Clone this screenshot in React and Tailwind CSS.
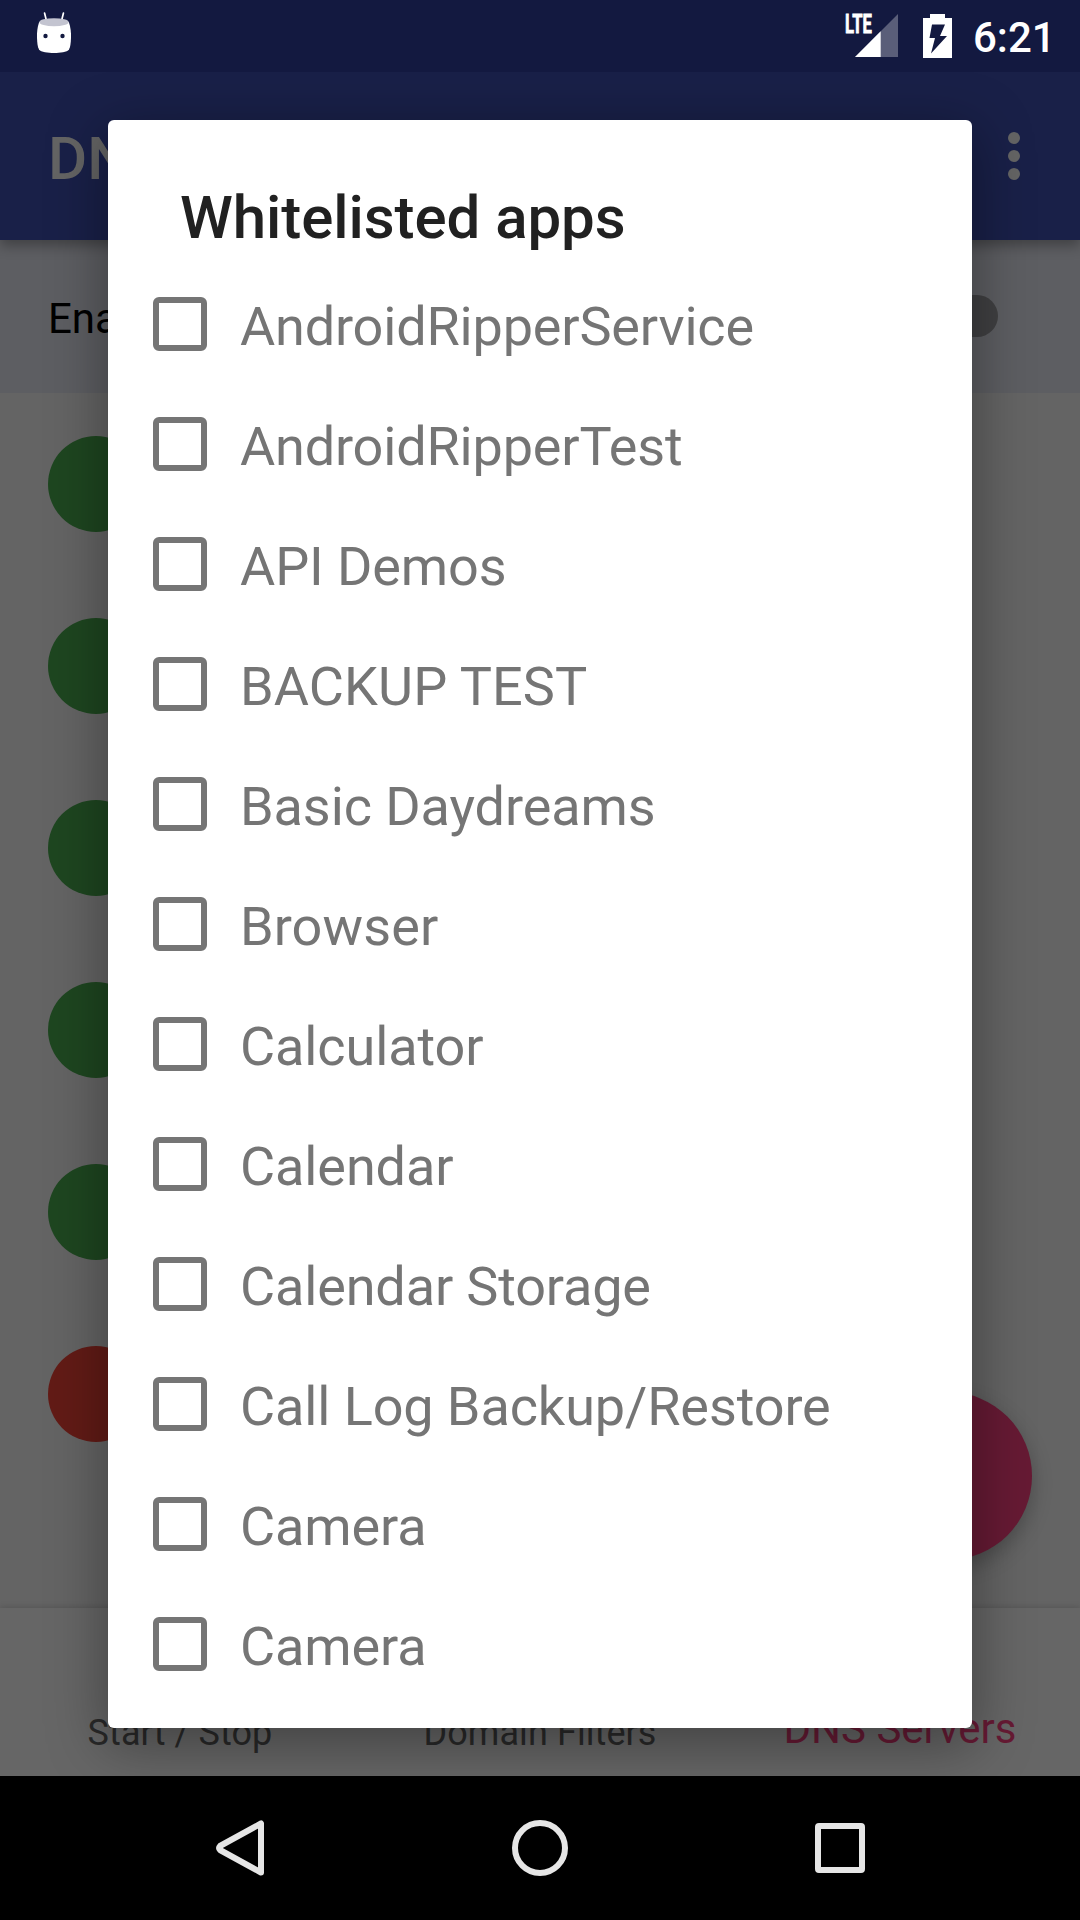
const apps = [
  { name: 'AndroidRipperService', tracking: 'tracking-[-0.17px]' },
  { name: 'AndroidRipperTest', tracking: 'tracking-[-0.17px]' },
  { name: 'API Demos', tracking: 'tracking-[-0.1px]' },
  { name: 'BACKUP TEST', tracking: 'tracking-[0.1px]' },
  { name: 'Basic Daydreams', tracking: 'tracking-[-0.08px]' },
  { name: 'Browser', tracking: 'tracking-[0.1px]' },
  { name: 'Calculator', tracking: 'tracking-[-0.1px]' },
  { name: 'Calendar', tracking: 'tracking-[-0.1px]' },
  { name: 'Calendar Storage', tracking: 'tracking-[-0.15px]' },
  { name: 'Call Log Backup/Restore', tracking: 'tracking-[-0.1px]' },
  { name: 'Camera', tracking: 'tracking-[-0.1px]' },
  { name: 'Camera', tracking: 'tracking-[-0.1px]' },
];

const servers = ['up', 'up', 'up', 'up', 'up', 'down'];

function AndroidIcon() {
  return (
    <svg width="36" height="42" viewBox="0 0 36 42">
      <path d="M8.6 1.2 10.4 8.5M27.4 1.2 25.6 8.5" stroke="#fff" strokeWidth="1.7" strokeLinecap="round" />
      <path d="M3.2 10C1.4 15 .8 20 1 26c.2 5 .6 9 2 11.5C5 40.200 12 41 18 41s13-.8 15-3.500c1.400-2.500 1.800-6.500 2-11.500.2-6-.4-11-2.200-16Z" fill="#fff" />
      <ellipse cx="18" cy="10.200" rx="14.700" ry="4" fill="#c3c4d0" />
      <circle cx="9.500" cy="24" r="2.200" fill="#131940" />
      <circle cx="26.500" cy="24" r="2.200" fill="#131940" />
    </svg>
  );
}

function SignalIcon() {
  return (
    <svg width="43" height="43" viewBox="0 0 43 43">
      <path d="M43 0v43H0Z" fill="#fff" fillOpacity=".3" />
      <path d="M25.700 17.300V43H0Z" fill="#fff" />
    </svg>
  );
}

function BatteryIcon() {
  return (
    <svg width="29" height="44" viewBox="0 0 29 44">
      <path fillRule="evenodd" d="M7 0h15v4h7v40H0V4h7ZM9 10.500 6.500 24H12L8 39.500 24 22h-7l5-11.500Z" fill="#fff" />
    </svg>
  );
}

function StatusBar() {
  return (
    <div className="relative z-10 flex h-[72px] items-start bg-[#131940] pr-[29px] pl-9 text-white">
      <div className="pt-3">
        <AndroidIcon />
      </div>
      <div className="ml-auto flex items-start">
        <div className="mt-[9px] w-[10px]">
          <span className="block origin-left scale-x-[0.64] text-[26px] leading-[31px] font-bold [-webkit-text-stroke:0.8px_white]">LTE</span>
        </div>
        <div className="mt-[14px]">
          <SignalIcon />
        </div>
        <div className="mt-[14px] ml-[25px]">
          <BatteryIcon />
        </div>
        <span className="mt-[13px] ml-[21px] w-[78px] text-[42px] leading-[50px] font-medium">6:21</span>
      </div>
    </div>
  );
}

function AppBar() {
  return (
    <header className="relative flex h-[168px] items-center justify-between bg-[#192048] pr-[60px] pl-12 text-[#646464] shadow-[0_6px_12px_rgba(0,0,0,0.3)]">
      <h1 className="pt-[6px] text-[60px] leading-[70px] font-medium">DNS</h1>
      <div className="flex flex-col gap-[6px]">
        <i className="size-3 rounded-full bg-[#646464]" />
        <i className="size-3 rounded-full bg-[#646464]" />
        <i className="size-3 rounded-full bg-[#646464]" />
      </div>
    </header>
  );
}

function ServerScreen() {
  return (
    <>
      <div className="flex h-[153px] items-center justify-between bg-[#5d5e62] pr-[82px] pb-px pl-12">
        <span className="pt-[5px] text-[42px] leading-[50px] text-black">Enable</span>
        <div className="h-[42px] w-[100px] rounded-full bg-[#404042]" />
      </div>
      <main className="h-[1215px] bg-[#646464]">
        {servers.map((state, i) => (
          <div key={i} className="flex h-[182px] items-center px-12">
            <div className={state === 'up' ? 'size-24 rounded-full bg-[#1e4620]' : 'size-24 rounded-full bg-[#621b16]'} />
          </div>
        ))}
      </main>
      <nav className="relative grid h-[168px] grid-cols-3 bg-[#666666] text-center text-[36px] text-[#292929] shadow-[0_-1px_6px_rgba(0,0,0,0.15)]">
        <span className="pt-[104px] leading-[42px] tracking-[0.08px]">Start / Stop</span>
        <span className="pt-[104px] leading-[42px] tracking-[0.08px]">Domain Filters</span>
        <span className="pt-[96px] text-[42px] leading-[50px] text-[#661a34]">DNS Servers</span>
      </nav>
    </>
  );
}

function SystemNav() {
  return (
    <div className="relative flex h-36 items-center justify-between bg-black pr-[215px] pl-[216px]">
      <svg width="48" height="56" viewBox="0 0 48 56" fill="none" stroke="#e6e6e6" strokeWidth="6" strokeLinejoin="round">
        <path d="M45 3.500v49L4 30q-2-2 0-4Z" />
      </svg>
      <div className="size-14 rounded-full border-[6px] border-[#e6e6e6]" />
      <div className="size-[50px] rounded-[4px] border-[6px] border-[#e6e6e6]" />
    </div>
  );
}

function WhitelistDialog() {
  return (
    <div role="dialog" className="absolute top-[120px] left-[108px] h-[1608px] w-[864px] rounded-[6px] bg-white shadow-[0_14px_56px_4px_rgba(0,0,0,0.35)]">
      <h2 className="h-36 pt-[63px] pl-[72px] text-[60px] leading-[70px] font-medium tracking-[-0.06px] text-[#212121]">Whitelisted apps</h2>
      <ul>
        {apps.map(({ name, tracking }, i) => (
          <li key={i} className="flex h-[120px] items-center gap-[33px] pl-[45px]">
            <span className="size-[54px] rounded-[6px] border-[6px] border-[#757575]" />
            <span className={`pt-[5px] text-[54px] leading-[64px] text-[#757575] ${tracking}`}>{name}</span>
          </li>
        ))}
      </ul>
    </div>
  );
}

export default function App() {
  return (
    <div className="relative h-[1920px] w-[1080px] overflow-hidden font-['Roboto',sans-serif]">
      <StatusBar />
      <AppBar />
      <ServerScreen />
      <div className="absolute top-[1392px] left-[864px] size-[168px] rounded-full bg-[#661a34] shadow-[0_8px_20px_rgba(0,0,0,0.25)]" />
      <WhitelistDialog />
      <SystemNav />
    </div>
  );
}
